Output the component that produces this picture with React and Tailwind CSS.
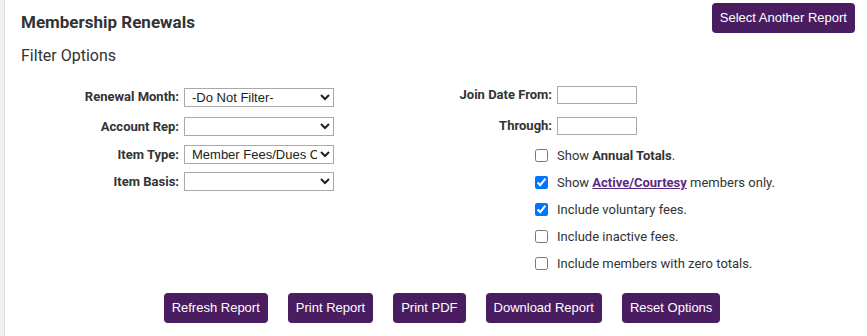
import React from 'react';

const labelCls = "flex items-center justify-end text-[13px] font-bold text-[#333] [font-family:Roboto,sans-serif]";
const selectCls = "w-[150px] h-[19px] border border-[#a9a9a9] bg-white pl-[3px] text-[13px] text-[#222] [font-family:'Liberation_Sans',Arial,sans-serif]";
const inputCls = "w-[80px] h-[18px] border border-[#a9a9a9] bg-white";
const btnCls = "h-[30px] px-[8px] rounded-[4px] bg-[#4a1d60] text-white text-[13px] [font-family:'Liberation_Sans',Arial,sans-serif]";

const CheckRow = ({ checked, children }) => (
  <>
    <div className="flex items-center justify-end pr-[4px] h-[27px]">
      <input type="checkbox" defaultChecked={checked} className="m-0 w-[13px] h-[13px]" />
    </div>
    <div className="flex items-center h-[27px] text-[13px] text-[#333] [font-family:Roboto,sans-serif]">
      {children}
    </div>
  </>
);

const App = () => {
  return (
    <div className="flex min-h-screen bg-white">
      {/* left gutter */}
      <div className="w-[5px] bg-[#f0f0f0] border-r border-[#dedede]" />

      <div className="flex-1 pl-[16px] pr-[12px]">
        {/* Header */}
        <div className="flex justify-between items-start h-[33px]">
          <h1 className="pt-[12px] text-[17px] leading-[20px] font-bold text-[#333] [font-family:Roboto,sans-serif]">
            Membership Renewals
          </h1>
          <button className={`${btnCls} mt-[3px]`}>Select Another Report</button>
        </div>
        <h2 className="mt-[13px] text-[16px] leading-[20px] text-[#333] [font-family:Roboto,sans-serif]">
          Filter Options
        </h2>

        {/* Filters */}
        <div className="mt-[14px] flex">
          <div className="grid grid-cols-[158px_150px] gap-x-[5px] grid-rows-[30px_29px_27px_27px] pt-[2px]">
            <div className={labelCls}>Renewal Month:</div>
            <div className="flex items-center">
              <select className={selectCls} defaultValue="none">
                <option value="none">-Do Not Filter-</option>
              </select>
            </div>
            <div className={labelCls}>Account Rep:</div>
            <div className="flex items-center">
              <select className={selectCls}>
                <option></option>
              </select>
            </div>
            <div className={labelCls}>Item Type:</div>
            <div className="flex items-center">
              <select className={selectCls}>
                <option>Member Fees/Dues Only</option>
              </select>
            </div>
            <div className={labelCls}>Item Basis:</div>
            <div className="flex items-center">
              <select className={selectCls}>
                <option></option>
              </select>
            </div>
          </div>

          <div className="grid grid-cols-[218px_auto] gap-x-[5px] grid-rows-[30px_32px_27px_27px_27px_27px_27px]">
            <div className={labelCls}>Join Date From:</div>
            <div className="flex items-center">
              <input type="text" className={inputCls} />
            </div>
            <div className={labelCls}>Through:</div>
            <div className="flex items-center">
              <input type="text" className={inputCls} />
            </div>
            <CheckRow>
              Show&nbsp;<span className="font-bold">Annual Totals</span>.
            </CheckRow>
            <CheckRow checked>
              Show&nbsp;
              <a href="#" className="font-bold text-[#5b2a82] underline">Active/Courtesy</a>
              &nbsp;members only.
            </CheckRow>
            <CheckRow checked>Include voluntary fees.</CheckRow>
            <CheckRow>Include inactive fees.</CheckRow>
            <CheckRow>Include members with zero totals.</CheckRow>
          </div>
        </div>

        {/* Actions */}
        <div className="mt-[16px] flex justify-center gap-[20px] pl-[8px]">
          <button className={btnCls}>Refresh Report</button>
          <button className={btnCls}>Print Report</button>
          <button className={btnCls}>Print PDF</button>
          <button className={btnCls}>Download Report</button>
          <button className={btnCls}>Reset Options</button>
        </div>
      </div>
    </div>
  );
};

export default App;
